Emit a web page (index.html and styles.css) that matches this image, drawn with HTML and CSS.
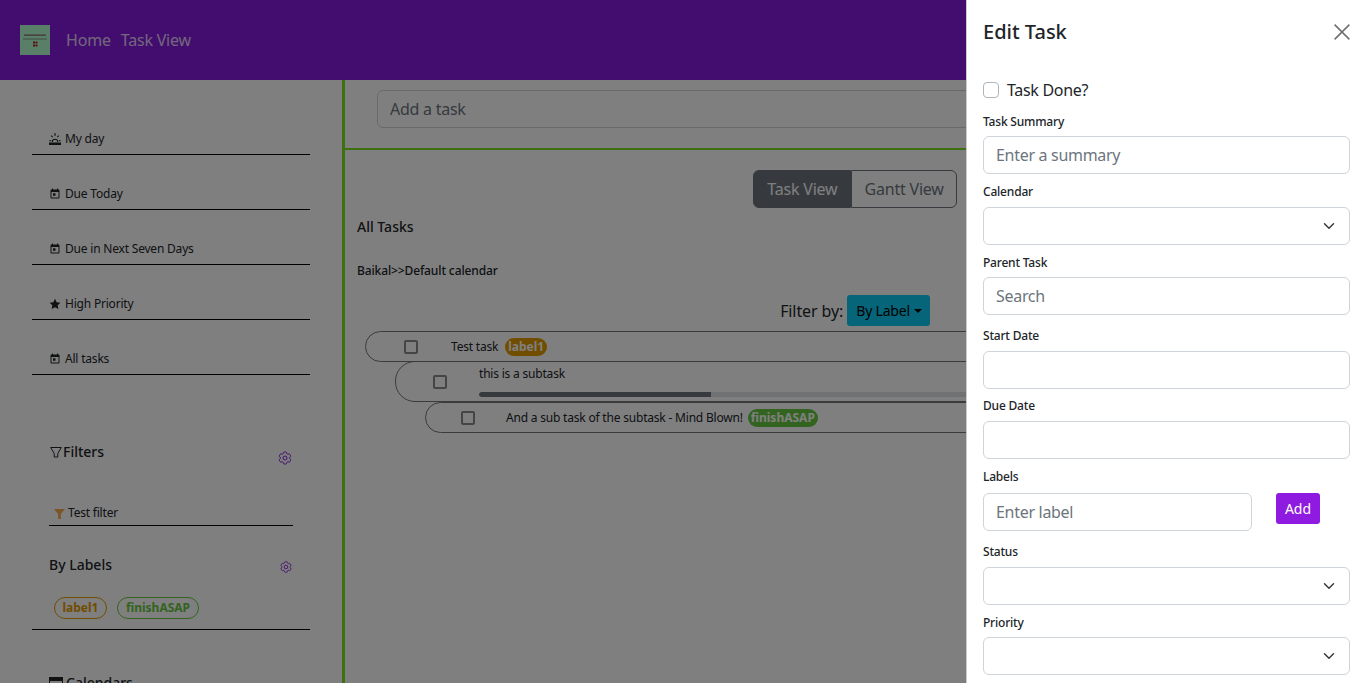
FILE: index.html
```html
<!DOCTYPE html>
<html lang="en">
<head>
<meta charset="utf-8">
<title>Task View</title>
<link rel="stylesheet" href="styles.css">
</head>
<body>
<svg class="defs" aria-hidden="true">
  <symbol id="i-cal" viewBox="0 0 24 24"><path d="M6 1h2v2h8V1h2v2h1c1.1 0 2 .9 2 2v14c0 1.1-.9 2-2 2H5c-1.1 0-2-.9-2-2V5c0-1.1.9-2 2-2h1zM5 8v11h14V8z"/><path d="M8 10.5h5v5H8z"/></symbol>
  <symbol id="i-gear" viewBox="0 0 24 24"><path fill="none" stroke="currentColor" stroke-width="1.5" stroke-linejoin="round" d="M9.594 3.94c.09-.542.56-.94 1.11-.94h2.593c.55 0 1.02.398 1.11.94l.213 1.281c.063.374.313.686.645.87.074.04.147.083.22.127.325.196.72.257 1.075.124l1.217-.456a1.125 1.125 0 0 1 1.37.49l1.296 2.247a1.125 1.125 0 0 1-.26 1.431l-1.003.827c-.293.241-.438.613-.43.992a7.723 7.723 0 0 1 0 .255c-.008.378.137.75.43.991l1.004.827c.424.35.534.955.26 1.43l-1.298 2.247a1.125 1.125 0 0 1-1.369.491l-1.217-.456c-.355-.133-.75-.072-1.076.124a6.47 6.47 0 0 1-.22.128c-.331.183-.581.495-.644.869l-.213 1.281c-.09.543-.56.94-1.11.94h-2.594c-.55 0-1.019-.398-1.11-.94l-.213-1.281c-.062-.374-.312-.686-.644-.87a6.52 6.52 0 0 1-.22-.127c-.325-.196-.72-.257-1.076-.124l-1.217.456a1.125 1.125 0 0 1-1.369-.49l-1.297-2.247a1.125 1.125 0 0 1 .26-1.431l1.004-.827c.292-.24.437-.613.43-.991a6.932 6.932 0 0 1 0-.255c.007-.38-.138-.751-.43-.992l-1.004-.827a1.125 1.125 0 0 1-.26-1.43l1.297-2.247a1.125 1.125 0 0 1 1.37-.491l1.216.456c.356.133.751.072 1.076-.124.072-.044.146-.086.22-.128.332-.183.582-.495.644-.869z"/><circle cx="12" cy="12" r="3" fill="none" stroke="currentColor" stroke-width="1.5"/></symbol>
</svg>

<nav class="topbar">
  <svg class="logo" viewBox="0 0 30 30" aria-hidden="true">
    <rect width="30" height="30" fill="#b4ffd0"/>
    <rect x="4" y="9.500" width="22" height="1.300" fill="#8a6a62"/>
    <rect x="3" y="13.500" width="24" height="1" fill="#7d9a88"/>
    <path d="M13 16.500h2V18.500h-2zM15.500 16.500h2V18.500h-2zM13 19.500h2V21.500h-2zM15.500 19.500h2V21.500h-2z" fill="#a82020"/>
  </svg>
  <a class="nav-link" href="#">Home</a>
  <a class="nav-link" href="#">Task View</a>
</nav>

<div class="layout">
  <aside class="sidebar">
    <div class="side-item">
      <svg class="ico" viewBox="0 0 16 16" aria-hidden="true"><path d="M0 12.500h16V16H0zM3.800 12a4.200 4.200 0 0 1 8.400 0h-1.300a2.900 2.900 0 0 0-5.800 0zM7.300 0h1.400v4H7.300zM2.400 4l1-1 2 2-1 1zM10.600 5l2-2 1 1-2 2zM.5 9.600h2.600V11H.5zM12.900 9.600h2.600V11h-2.600z"/></svg>My day
    </div>
    <div class="side-item"><svg class="ico" aria-hidden="true"><use href="#i-cal"/></svg>Due Today</div>
    <div class="side-item"><svg class="ico" aria-hidden="true"><use href="#i-cal"/></svg>Due in Next Seven Days</div>
    <div class="side-item">
      <svg class="ico" viewBox="0 0 16 16" aria-hidden="true"><path d="M8 1l2.200 4.600 5 .7-3.600 3.500.9 5L8 12.400l-4.500 2.400.9-5L.8 6.300l5-.7z"/></svg>High Priority
    </div>
    <div class="side-item"><svg class="ico" aria-hidden="true"><use href="#i-cal"/></svg>All tasks</div>

    <section class="side-block filters">
      <div class="block-head">
        <h3 class="block-title">
          <svg class="funnel-outline" viewBox="0 0 12 12" aria-hidden="true"><path fill="none" stroke="currentColor" stroke-width="1" d="M.7 1.500h10.600L7.800 7.500v3.500H4.200V7.500z"/></svg>Filters
        </h3>
        <svg class="gear gear-lg" aria-hidden="true"><use href="#i-gear"/></svg>
      </div>
      <div class="filter-item">
        <svg class="funnel-solid" viewBox="0 0 12 12" aria-hidden="true"><path d="M0 1h12L7.500 6.500V12h-3V6.500z"/></svg>Test filter
      </div>
    </section>

    <section class="side-block labels">
      <div class="block-head">
        <h3 class="block-title">By Labels</h3>
        <svg class="gear gear-sm" aria-hidden="true"><use href="#i-gear"/></svg>
      </div>
      <div class="label-list">
        <span class="tag tag-orange">label1</span>
        <span class="tag tag-green">finishASAP</span>
      </div>
    </section>

    <section class="side-block calendars">
      <div class="block-head">
        <h3 class="block-title"><svg class="cal-head" viewBox="0 0 14 14" aria-hidden="true"><path d="M0 1h14v4H0z"/><path fill="none" stroke="currentColor" d="M.5 1.500h13v11H.5z"/></svg>Calendars</h3>
        <svg class="gear gear-lg" aria-hidden="true"><use href="#i-gear"/></svg>
      </div>
    </section>
  </aside>

  <main class="content">
    <div class="add-bar"><input class="add-input" type="text" placeholder="Add a task"></div>

    <div class="view-switch">
      <div class="btn-group">
        <button class="seg seg-on" type="button">Task View</button>
        <button class="seg" type="button">Gantt View</button>
      </div>
    </div>

    <h4 class="all-title">All Tasks</h4>
    <h5 class="cal-title">Baikal&gt;&gt;Default calendar</h5>

    <div class="filter-row">
      <span class="filter-label">Filter by:</span>
      <button class="drop" type="button">By Label<span class="caret"></span></button>
    </div>

    <ul class="tasks">
      <li class="task">
        <span class="box"></span>
        <div class="task-body"><span>Test task</span><span class="pill pill-orange">label1</span></div>
      </li>
      <li class="task task-sub">
        <span class="box"></span>
        <div class="task-body task-stack">
          <span>this is a subtask</span>
          <div class="progress"><div class="progress-fill"></div></div>
        </div>
      </li>
      <li class="task task-subsub">
        <span class="box"></span>
        <div class="task-body"><span>And a sub task of the subtask - Mind Blown!</span><span class="pill pill-green">finishASAP</span></div>
      </li>
    </ul>
  </main>
</div>

<div class="backdrop"></div>

<aside class="panel">
  <header class="panel-head">
    <h2 class="panel-title">Edit Task</h2>
    <svg class="close" viewBox="0 0 16 16" aria-hidden="true"><path d="M.6.6l14.800 14.800M15.400.6L.6 15.400" fill="none" stroke="currentColor" stroke-width="1.500"/></svg>
  </header>
  <label class="done"><input class="done-box" type="checkbox">Task Done?</label>

  <label class="f-label f-first">Task Summary</label>
  <input class="ctl" type="text" placeholder="Enter a summary">

  <label class="f-label f-wide-7">Calendar</label>
  <select class="ctl sel"></select>

  <label class="f-label">Parent Task</label>
  <input class="ctl" type="text" placeholder="Search">

  <label class="f-label f-gap f-wide-7">Start Date</label>
  <input class="ctl" type="text">

  <label class="f-label f-near f-wide-7">Due Date</label>
  <input class="ctl" type="text">

  <label class="f-label f-wide-8">Labels</label>
  <div class="label-row">
    <input class="ctl label-input" type="text" placeholder="Enter label">
    <button class="add-btn" type="button">Add</button>
  </div>

  <label class="f-label f-gap f-wide-7">Status</label>
  <select class="ctl sel"></select>

  <label class="f-label">Priority</label>
  <select class="ctl sel"></select>
</aside>
</body>
</html>
```
FILE: styles.css
```css
* { box-sizing: border-box; }
html, body { height: 100%; }
body {
  margin: 0;
  height: 683px;
  overflow: hidden;
  background: #fff;
  color: #212529;
  font-family: "Noto Sans", "Open Sans", sans-serif;
  font-size: 16px;
  letter-spacing: -.2px;
}
.defs { display: none; }

/* top bar */
.topbar {
  height: 80px;
  background: #8619de;
  display: flex;
  align-items: center;
  padding-left: 20px;
}
.logo { width: 30px; height: 30px; margin-right: 16px; }
.nav-link {
  color: rgba(255, 255, 255, .8);
  text-decoration: none;
  font-size: 16px;
  margin-right: 10px;
}

/* layout */
.layout { display: flex; height: 603px; overflow: hidden; }
.sidebar {
  flex: 0 0 345px;
  border-right: 3px solid #7ee01e;
  padding-top: 49px;
}
.content { flex: 1; min-width: 0; }

/* sidebar */
.side-item {
  width: 278px;
  margin: 0 0 29px 32px;
  padding: 0 0 5px 17px;
  border-bottom: 1px solid #000;
  font-size: 12px;
  line-height: 18px;
  height: 26px;
  display: flex;
  align-items: center;
  color: #212529;
}
.ico { width: 12px; height: 12px; margin-right: 4px; fill: #212529; flex: none; }
.side-block { margin-left: 49px; }
.block-head { display: flex; justify-content: space-between; align-items: flex-start; }
.block-title {
  margin: 0;
  font-size: 14px;
  font-weight: 500;
  line-height: 20px;
  display: flex;
  align-items: center;
  letter-spacing: 0;
}
.filters { margin-top: 67px; width: 244px; }
.funnel-outline { width: 12px; height: 12px; margin: 0 1px; color: #212529; }
.gear { color: #8619de; display: block; }
.gear-lg { width: 16px; height: 16px; margin: 8px 0 0; }
.gear-sm { width: 14px; height: 14px; margin: 5px 0 0; }
.filter-item {
  margin-top: 36px;
  padding: 0 0 2px 5px;
  border-bottom: 1px solid #000;
  font-size: 12px;
  line-height: 18px;
  height: 24px;
  display: flex;
  align-items: center;
}
.funnel-solid { width: 11px; height: 11px; margin: 2px 3px 0 0; fill: #f3ac52; }
.labels { margin-top: 29px; margin-left: 32px; width: 278px; border-bottom: 1px solid #000; padding: 0 17px 10px; height: 75px; }
.label-list { display: flex; gap: 10px; margin-top: 22px; padding-left: 5px; }
.tag {
  border-radius: 12px;
  border: 1px solid;
  font-size: 12px;
  font-weight: 700;
  line-height: 20px;
  padding: 0 8px;
  background: transparent;
  letter-spacing: 0;
}
.tag-orange { color: #e29a00; border-color: #e29a00; padding: 0 7.5px; }
.tag-green { color: #66c83f; border-color: #66c83f; }
.calendars { margin-top: 43px; width: 244px; }
.calendars .gear { margin-top: 12px; }
.cal-head { width: 14px; height: 14px; margin-right: 3px; fill: #212529; color: #212529; }

/* main */
.add-bar {
  height: 70px;
  padding: 10px 0 0 32px;
  border-bottom: 2px solid #7ee01e;
}
.add-input {
  width: 960px;
  height: 38px;
  border: 1px solid #ced4da;
  border-radius: 6px;
  padding: 0 12px;
  font: inherit;
  letter-spacing: -.25px;
  background: #fff;
  outline: none;
}
.add-input::placeholder, .ctl::placeholder { color: #6c757d; opacity: 1; }
.view-switch { display: flex; justify-content: center; margin-top: 20px; padding-right: 1px; }
.btn-group { display: flex; }
.seg {
  height: 38px;
  padding: 0 12px;
  border: 1px solid #6c757d;
  background: transparent;
  color: #6c757d;
  font: inherit;
  letter-spacing: -.2px;
  border-radius: 0 6px 6px 0;
}
.seg-on {
  padding: 0 13px;
  background: #6c757d;
  color: #fff;
  border-radius: 6px 0 0 6px;
}
.all-title {
  margin: 9px 0 0 12px;
  font-size: 14px;
  font-weight: 500;
  line-height: 20px;
  letter-spacing: 0;
}
.cal-title {
  margin: 25px 0 0 12px;
  font-size: 12px;
  font-weight: 500;
  line-height: 18px;
  letter-spacing: -.12px;
}
.filter-row {
  display: flex;
  justify-content: center;
  align-items: center;
  gap: 4px;
  margin-top: 15px;
  padding-right: 1px;
}
.filter-label { font-size: 16px; letter-spacing: -.1px; }
.drop {
  height: 31px;
  padding: 0 8px 0 9px;
  border: 0;
  border-radius: 3px;
  background: #0dcaf0;
  color: #000;
  font: inherit;
  font-size: 14px;
  letter-spacing: -.2px;
  display: flex;
  align-items: center;
}
.caret {
  margin-left: 4px;
  border-top: 4px solid #000;
  border-left: 4px solid transparent;
  border-right: 4px solid transparent;
}
.tasks { list-style: none; margin: 5px 0 0; padding: 0; }
.task {
  margin-left: 20px;
  width: 1000px;
  height: 31px;
  border: 1px solid #777;
  border-radius: 16px 0 0 16px;
  display: flex;
  align-items: center;
  font-size: 12px;
}
.task-sub { margin-left: 50px; height: 41px; margin-top: -1px; border-radius: 20px 0 0 20px; }
.task-subsub { margin-left: 80px; height: 31px; border-radius: 16px 0 0 16px; }
.box {
  flex: none;
  width: 14px;
  height: 14px;
  margin-left: 38px;
  border: 2px solid #8a8a8a;
  border-radius: 2px;
  background: #fff;
}
.task-sub .box { margin-left: 37px; }
.task-subsub .box { margin-left: 35px; }
.task-body { margin-left: 33px; display: flex; align-items: center; gap: 7px; flex: 1; white-space: nowrap; }
.task-sub .task-body { margin-left: 32px; }
.task-subsub .task-body { margin-left: 31px; gap: 5px; }
.task-stack { flex-direction: column; align-items: stretch; gap: 0; margin-top: -2px; }
.task-stack > span { line-height: 18px; }
.progress { height: 5px; margin-top: 9px; background: #dee2e6; border-radius: 3px; overflow: hidden; }
.progress-fill { width: 232px; height: 100%; background: #6c757d; border-radius: 3px 0 0 3px; }
.pill {
  border-radius: 9px;
  height: 18px;
  line-height: 18px;
  padding: 0 3px;
  color: #fff;
  font-weight: 700;
  letter-spacing: 0;
}
.pill-orange { background: #e29a00; }
.pill-green { background: #66c83f; }

/* overlay */
.backdrop {
  position: fixed;
  inset: 0;
  background: rgba(0, 0, 0, .5);
}
.panel {
  position: fixed;
  top: 0;
  right: 0;
  bottom: 0;
  width: 400px;
  background: #fff;
  border-left: 1px solid rgba(0, 0, 0, .2);
  padding: 0 16px;
  overflow: hidden;
  display: flex;
  flex-direction: column;
}
.panel-head {
  height: 63px;
  display: flex;
  align-items: center;
  justify-content: space-between;
  flex: none;
}
.panel-title { margin: 0; font-size: 20px; font-weight: 500; letter-spacing: 0; }
.close { width: 16px; height: 16px; color: #6f6f6f; }
.done {
  display: flex;
  align-items: center;
  height: 24px;
  margin-top: 15px;
  flex: none;
  letter-spacing: -.3px;
}
.done-box {
  appearance: none;
  width: 16px;
  height: 16px;
  margin: 0 8px 0 0;
  border: 1px solid #adb5bd;
  border-radius: 4px;
  background: #fff;
}
.f-label {
  display: block;
  flex: none;
  font-size: 12px;
  font-weight: 500;
  line-height: 18px;
  margin: 9px 0 5px;
  letter-spacing: -.2px;
}
.f-first { margin-top: 11px; }
.f-gap { margin-top: 12px; }
.f-near { margin-top: 8px; }
.f-wide-7 { margin-bottom: 6px; }
.f-wide-8 { margin-bottom: 7px; }
.ctl {
  display: block;
  flex: none;
  width: 100%;
  height: 38px;
  padding: 0 12px;
  border: 1px solid #ced4da;
  border-radius: 6px;
  background: #fff;
  font: inherit;
  letter-spacing: -.3px;
  color: #212529;
  outline: none;
}
.sel {
  appearance: none;
  background-image: url("data:image/svg+xml,%3csvg xmlns='http://www.w3.org/2000/svg' viewBox='0 0 16 16'%3e%3cpath fill='none' stroke='%23343a40' stroke-linecap='round' stroke-linejoin='round' stroke-width='2' d='m2 5 6 6 6-6'/%3e%3c/svg%3e");
  background-repeat: no-repeat;
  background-position: right 13px center;
  background-size: 14px 12px;
}
.label-row { display: flex; align-items: flex-start; flex: none; }
.label-input { width: 269px; }
.add-btn {
  margin-left: 24px;
  width: 44px;
  height: 31px;
  border: 0;
  border-radius: 3px;
  background: #8f1be0;
  color: #fff;
  font: inherit;
  font-size: 14px;
  padding: 0;
}
```
